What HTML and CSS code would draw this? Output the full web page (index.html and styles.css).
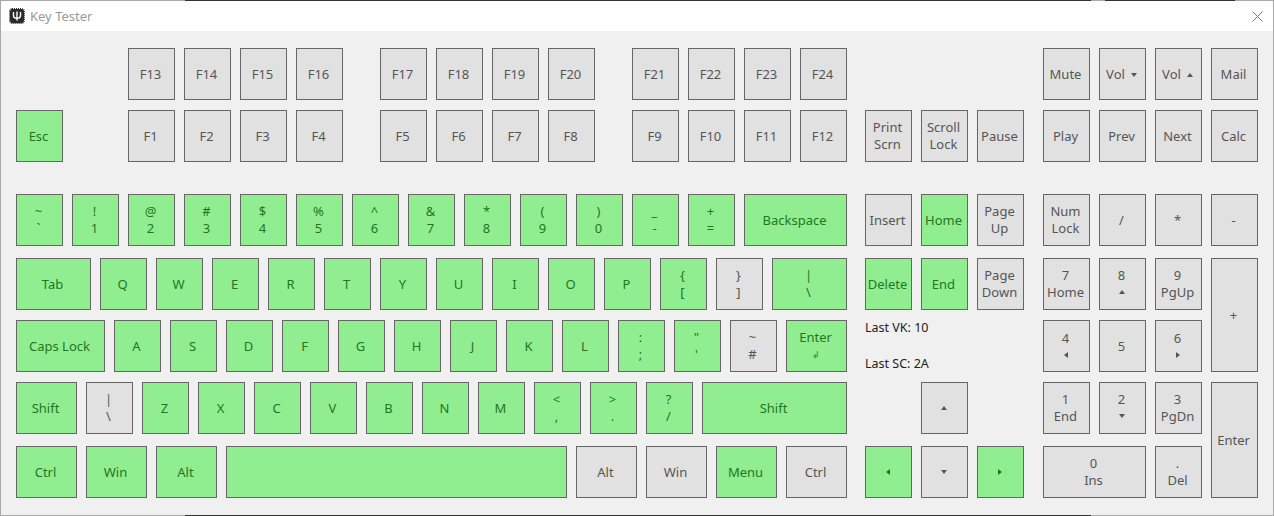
FILE: index.html
```html
<!DOCTYPE html>
<html lang="en">
<head>
    <meta charset="UTF-8">
    <title>Key Tester</title>
    <link rel="stylesheet" href="styles.css">
</head>
<body>
    <div class="window">
        <div class="edge edge-top"></div>
        <div class="edge edge-bottom"></div>

        <div class="titlebar">
            <svg class="app-icon" width="16" height="16" viewBox="0 0 16 16">
                <rect x="1" y="1" width="14" height="14" rx="2" fill="#2b2b2b"/>
                <rect x="0.5" y="0.5" width="15" height="15" rx="2.5" fill="none" stroke="#2b2b2b" stroke-dasharray="1 1"/>
                <path d="M4.5 4v3.5c0 2 1.5 2.8 3.5 2.8s3.5-.8 3.5-2.8V4M8 3.5v9" fill="none" stroke="#fff" stroke-width="1.4"/>
            </svg>
            <span class="title">Key Tester</span>
            <svg class="close" width="11" height="11" viewBox="0 0 11 11">
                <path d="M.5 .5l10 10M10.5 .5l-10 10" stroke="#777" stroke-width="1"/>
            </svg>
        </div>

        <div class="board">
            <div class="block main">
                <div class="row">
                    <div class="key push-f">F13</div>
                    <div class="key">F14</div>
                    <div class="key">F15</div>
                    <div class="key">F16</div>
                    <div class="key push">F17</div>
                    <div class="key">F18</div>
                    <div class="key">F19</div>
                    <div class="key">F20</div>
                    <div class="key push">F21</div>
                    <div class="key">F22</div>
                    <div class="key">F23</div>
                    <div class="key">F24</div>
                </div>
                <div class="row mt10">
                    <div class="key on">Esc</div>
                    <div class="key push-esc">F1</div>
                    <div class="key">F2</div>
                    <div class="key">F3</div>
                    <div class="key">F4</div>
                    <div class="key push">F5</div>
                    <div class="key">F6</div>
                    <div class="key">F7</div>
                    <div class="key">F8</div>
                    <div class="key push">F9</div>
                    <div class="key">F10</div>
                    <div class="key">F11</div>
                    <div class="key">F12</div>
                </div>
                <div class="row mt32">
                    <div class="key on">~<br>`</div>
                    <div class="key on">!<br>1</div>
                    <div class="key on">@<br>2</div>
                    <div class="key on">#<br>3</div>
                    <div class="key on">$<br>4</div>
                    <div class="key on">%<br>5</div>
                    <div class="key on">^<br>6</div>
                    <div class="key on">&amp;<br>7</div>
                    <div class="key on">*<br>8</div>
                    <div class="key on">(<br>9</div>
                    <div class="key on">)<br>0</div>
                    <div class="key on">_<br>-</div>
                    <div class="key on">+<br>=</div>
                    <div class="key on w103">Backspace</div>
                </div>
                <div class="row mt12">
                    <div class="key on w75">Tab</div>
                    <div class="key on">Q</div>
                    <div class="key on">W</div>
                    <div class="key on">E</div>
                    <div class="key on">R</div>
                    <div class="key on">T</div>
                    <div class="key on">Y</div>
                    <div class="key on">U</div>
                    <div class="key on">I</div>
                    <div class="key on">O</div>
                    <div class="key on">P</div>
                    <div class="key on">{<br>[</div>
                    <div class="key">}<br>]</div>
                    <div class="key on w75">|<br>\</div>
                </div>
                <div class="row mt10">
                    <div class="key on w89">Caps Lock</div>
                    <div class="key on">A</div>
                    <div class="key on">S</div>
                    <div class="key on">D</div>
                    <div class="key on">F</div>
                    <div class="key on">G</div>
                    <div class="key on">H</div>
                    <div class="key on">J</div>
                    <div class="key on">K</div>
                    <div class="key on">L</div>
                    <div class="key on">:<br>;</div>
                    <div class="key on">"<br>'</div>
                    <div class="key">~<br>#</div>
                    <div class="key on w61">Enter<span class="return">↲</span></div>
                </div>
                <div class="row mt10">
                    <div class="key on w61">Shift</div>
                    <div class="key">|<br>\</div>
                    <div class="key on">Z</div>
                    <div class="key on">X</div>
                    <div class="key on">C</div>
                    <div class="key on">V</div>
                    <div class="key on">B</div>
                    <div class="key on">N</div>
                    <div class="key on">M</div>
                    <div class="key on">&lt;<br>,</div>
                    <div class="key on">&gt;<br>.</div>
                    <div class="key on">?<br>/</div>
                    <div class="key on w145">Shift</div>
                </div>
                <div class="row mt12">
                    <div class="key on w61">Ctrl</div>
                    <div class="key on w61">Win</div>
                    <div class="key on w61">Alt</div>
                    <div class="key on w341"></div>
                    <div class="key w61">Alt</div>
                    <div class="key w61">Win</div>
                    <div class="key on w61">Menu</div>
                    <div class="key w61">Ctrl</div>
                </div>
            </div>

            <div class="block nav">
                <div class="row"></div>
                <div class="row mt10">
                    <div class="key">Print<br>Scrn</div>
                    <div class="key">Scroll<br>Lock</div>
                    <div class="key">Pause</div>
                </div>
                <div class="row mt32">
                    <div class="key">Insert</div>
                    <div class="key on">Home</div>
                    <div class="key">Page<br>Up</div>
                </div>
                <div class="row mt12">
                    <div class="key on">Delete</div>
                    <div class="key on">End</div>
                    <div class="key">Page<br>Down</div>
                </div>
                <div class="row mt10 last-codes">
                    <div>Last VK: 10</div>
                    <div>Last SC: 2A</div>
                </div>
                <div class="row mt10">
                    <div class="key push-arrow"><i class="tri up"></i></div>
                </div>
                <div class="row mt12">
                    <div class="key on"><i class="tri left"></i></div>
                    <div class="key"><i class="tri down"></i></div>
                    <div class="key on"><i class="tri right"></i></div>
                </div>
            </div>

            <div class="block numpad">
                <div class="row">
                    <div class="key">Mute</div>
                    <div class="key"><span>Vol<i class="tri down inline"></i></span></div>
                    <div class="key"><span>Vol<i class="tri up inline"></i></span></div>
                    <div class="key">Mail</div>
                </div>
                <div class="row mt10">
                    <div class="key">Play</div>
                    <div class="key">Prev</div>
                    <div class="key">Next</div>
                    <div class="key">Calc</div>
                </div>
                <div class="row mt32">
                    <div class="key">Num<br>Lock</div>
                    <div class="key">/</div>
                    <div class="key">*</div>
                    <div class="key">-</div>
                </div>
                <div class="pad">
                    <div class="pad-digits">
                        <div class="row mt12">
                            <div class="key">7<br>Home</div>
                            <div class="key">8<i class="tri up under"></i></div>
                            <div class="key">9<br>PgUp</div>
                        </div>
                        <div class="row mt10">
                            <div class="key">4<i class="tri left under"></i></div>
                            <div class="key">5</div>
                            <div class="key">6<i class="tri right under"></i></div>
                        </div>
                        <div class="row mt10">
                            <div class="key">1<br>End</div>
                            <div class="key">2<i class="tri down under"></i></div>
                            <div class="key">3<br>PgDn</div>
                        </div>
                        <div class="row mt12">
                            <div class="key w103">0<br>Ins</div>
                            <div class="key">.<br>Del</div>
                        </div>
                    </div>
                    <div class="pad-side">
                        <div class="key plus">+</div>
                        <div class="key pad-enter">Enter</div>
                    </div>
                </div>
            </div>
        </div>
    </div>
</body>
</html>
```

FILE: styles.css
```css
* {
    box-sizing: border-box;
}

body {
    margin: 0;
    font-family: "Noto Sans", "Open Sans", sans-serif;
    font-size: 13px;
    background-color: #f0f0f0;
}

.window {
    position: relative;
    width: 1274px;
    height: 516px;
    border: 1px solid #a9a9a9;
    background-color: #f0f0f0;
}

/* the desktop showing behind the window edge */
.edge {
    position: absolute;
    left: 184px;
    width: 906px;
    height: 1px;
    background-color: #333;
}

.edge-top {
    top: -1px;
    width: 1050px;
    background: linear-gradient(to right, #333 906px, #a9a9a9 906px, #a9a9a9 920px, #333 920px);
}

.edge-bottom {
    bottom: -1px;
}

.titlebar {
    display: flex;
    align-items: center;
    height: 30px;
    padding: 0 10px 0 8px;
    background-color: #fff;
}

.title {
    margin-left: 5px;
    color: #9a9a9a;
}

.close {
    margin-left: auto;
}

.board {
    display: flex;
    padding: 17px 0 0 15px;
}

.main {
    width: 831px;
}

.nav {
    width: 159px;
    margin-left: 18px;
}

.numpad {
    margin-left: 19px;
}

.row {
    display: flex;
    gap: 9px;
    height: 52px;
}

.mt10 { margin-top: 10px; }
.mt12 { margin-top: 12px; }
.mt32 { margin-top: 32px; }

.key {
    display: flex;
    flex-direction: column;
    align-items: center;
    justify-content: center;
    width: 47px;
    height: 52px;
    flex-shrink: 0;
    padding-right: 2px;
    border: 1px solid #666;
    background-color: #e1e1e1;
    color: #555;
    line-height: 17px;
    text-align: center;
    white-space: nowrap;
}

.key.on {
    background-color: #90ee90;
    color: #23761f;
}

.w61 { width: 61px; }
.w75 { width: 75px; }
.w89 { width: 89px; }
.w103 { width: 103px; }
.w145 { width: 145px; }
.w341 { width: 341px; }

.push { margin-left: 28px; }
.push-f { margin-left: 112px; }
.push-esc { margin-left: 56px; }
.push-arrow { margin-left: 56px; }

.return {
    font-size: 9px;
    font-weight: bold;
    opacity: 0.7;
}

.last-codes {
    flex-direction: column;
    gap: 20px;
    color: #222;
    font-size: 12.5px;
    line-height: 16px;
}

.pad {
    display: flex;
    gap: 9px;
}

.pad-side {
    display: flex;
    flex-direction: column;
}

.plus {
    height: 114px;
    margin-top: 12px;
}

.pad-enter {
    height: 116px;
    margin-top: 10px;
}

/* arrow glyphs */
.tri {
    display: block;
    width: 0;
    height: 0;
    border-style: solid;
    border-color: transparent;
}

.tri.up {
    border-width: 0 3.5px 4px;
    border-bottom-color: currentColor;
}

.tri.down {
    border-width: 4px 3.5px 0;
    border-top-color: currentColor;
}

.tri.left {
    border-width: 3.5px 4px 3.5px 0;
    border-right-color: currentColor;
}

.tri.right {
    border-width: 3.5px 0 3.5px 4px;
    border-left-color: currentColor;
}

.tri.inline {
    display: inline-block;
    margin-left: 6px;
    vertical-align: 2px;
}

.tri.under {
    margin: 6px 0 7px;
}

.tri.left.under,
.tri.right.under {
    margin: 5px 0 5px;
}
```
